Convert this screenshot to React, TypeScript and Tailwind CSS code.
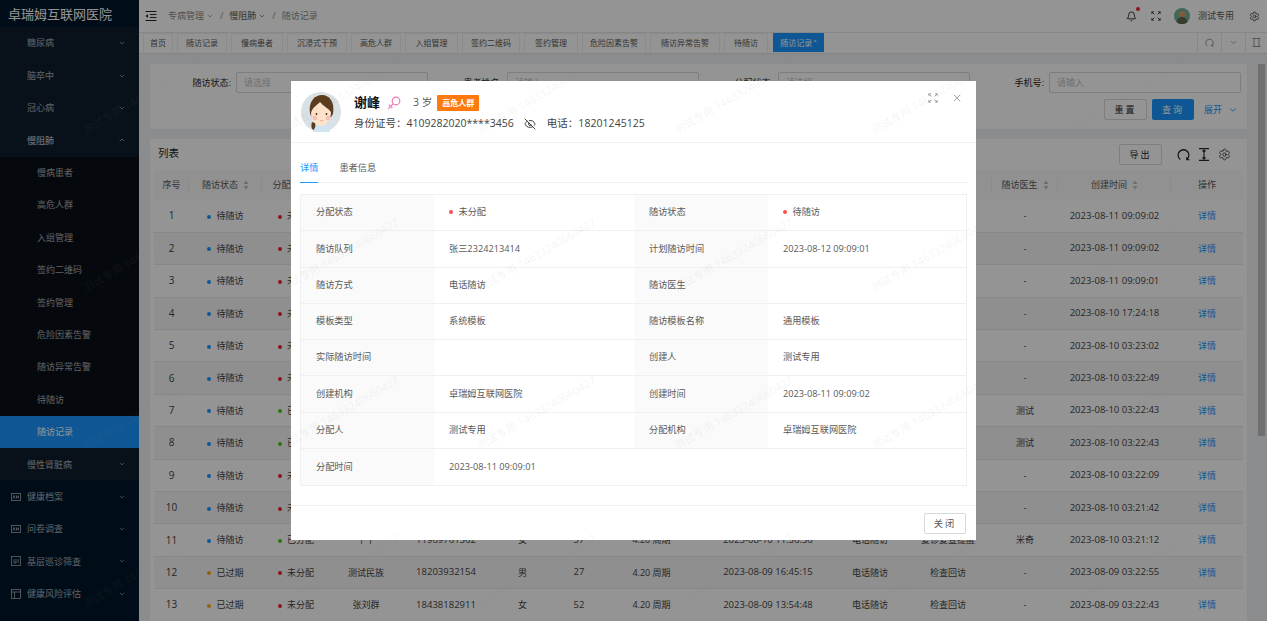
import React from 'react';
import { Bell, ChevronDown, ChevronUp, Settings, X, EyeOff } from 'lucide-react';

const menuTop = ['糖尿病', '脑卒中', '冠心病'];
const subMenu = ['慢病患者', '高危人群', '入组管理', '签约二维码', '签约管理', '危险因素告警', '随访异常告警', '待随访', '随访记录'];
const tabs = [
  { label: '首页', w: 'w-[30px]' },
  { label: '随访记录', w: 'w-[50px]' },
  { label: '慢病患者', w: 'w-[52px]' },
  { label: '沉浸式干预', w: 'w-[60px]' },
  { label: '高危人群', w: 'w-[50px]' },
  { label: '入组管理', w: 'w-[53px]' },
  { label: '签约二维码', w: 'w-[58px]' },
  { label: '签约管理', w: 'w-[54px]' },
  { label: '危险因素告警', w: 'w-[64px]' },
  { label: '随访异常告警', w: 'w-[70px]' },
  { label: '待随访', w: 'w-[44px]' },
];

interface Row {
  no: number;
  status: string;
  assign: string;
  name: string;
  phone: string;
  sex: string;
  age: string;
  period: string;
  plan: string;
  way: string;
  kind: string;
  doctor: string;
  created: string;
}

const row = (no: number, status: string, assign: string, name: string, phone: string, sex: string, age: string, plan: string, kind: string, doctor: string, created: string): Row => ({
  no, status, assign, name, phone, sex, age, period: '4.20 周期', plan, way: '电话随访', kind, doctor, created,
});

const rows: Row[] = [
  row(1, '待随访', '未分配', '谢峰', '18201245125', '女', '3', '2023-08-12 09:09:01', '通用模板', '-', '2023-08-11 09:09:02'),
  row(2, '待随访', '未分配', '谢峰', '18201245125', '女', '3', '2023-08-12 09:09:01', '通用模板', '-', '2023-08-11 09:09:02'),
  row(3, '待随访', '未分配', '谢峰', '18201245125', '女', '3', '2023-08-12 09:09:01', '通用模板', '-', '2023-08-11 09:09:01'),
  row(4, '待随访', '未分配', '张刘群', '18438182911', '女', '52', '2023-08-11 17:24:18', '检查回访', '-', '2023-08-10 17:24:18'),
  row(5, '待随访', '未分配', '测试民族', '18203932154', '男', '27', '2023-08-11 03:23:02', '检查回访', '-', '2023-08-10 03:23:02'),
  row(6, '待随访', '未分配', '测试民族', '18203932154', '男', '27', '2023-08-11 03:22:49', '检查回访', '-', '2023-08-10 03:22:49'),
  row(7, '待随访', '已分配', '测试民族', '18203932154', '男', '27', '2023-08-11 03:22:43', '检查回访', '测试', '2023-08-10 03:22:43'),
  row(8, '待随访', '已分配', '张刘群', '18438182911', '女', '52', '2023-08-11 03:22:43', '检查回访', '测试', '2023-08-10 03:22:43'),
  row(9, '待随访', '未分配', '张刘群', '18438182911', '女', '52', '2023-08-11 03:22:09', '检查回访', '-', '2023-08-10 03:22:09'),
  row(10, '待随访', '未分配', '张刘群', '18438182911', '女', '52', '2023-08-11 03:21:42', '检查回访', '-', '2023-08-10 03:21:42'),
  row(11, '待随访', '已分配', '丫丫', '11969761562', '女', '37', '2023-08-10 11:56:56', '复诊复查提醒', '米奇', '2023-08-10 03:21:12'),
  row(12, '已过期', '未分配', '测试民族', '18203932154', '男', '27', '2023-08-09 16:45:15', '检查回访', '-', '2023-08-09 03:22:55'),
  row(13, '已过期', '未分配', '张刘群', '18438182911', '女', '52', '2023-08-09 13:54:48', '检查回访', '-', '2023-08-09 03:22:43'),
];

const details: [string, React.ReactNode, string, React.ReactNode][] = [
  ['分配状态', <RedDot text="未分配" />, '随访状态', <RedDot text="待随访" />],
  ['随访队列', '张三2324213414', '计划随访时间', '2023-08-12 09:09:01'],
  ['随访方式', '电话随访', '随访医生', ''],
  ['模板类型', '系统模板', '随访模板名称', '通用模板'],
  ['实际随访时间', '', '创建人', '测试专用'],
  ['创建机构', '卓瑞姆互联网医院', '创建时间', '2023-08-11 09:09:02'],
  ['分配人', '测试专用', '分配机构', '卓瑞姆互联网医院'],
];

function RedDot({ text }: { text: string }) {
  return (
    <span className="flex items-center gap-[6px]">
      <span className="h-[3.5px] w-[3.5px] rounded-full bg-[#ff4d4f]" />
      {text}
    </span>
  );
}

function Dot({ color }: { color: string }) {
  return <span className={`mr-[5px] inline-block h-[4px] w-[4px] rounded-full align-middle ${color}`} />;
}

function SortIcon() {
  return (
    <svg width="6" height="10" viewBox="0 0 6 10" className="ml-[5px] shrink-0">
      <path d="M3 0.5 5.5 4H.5z" fill="#bfbfbf" />
      <path d="M3 9.5 5.5 6H.5z" fill="#bfbfbf" />
    </svg>
  );
}

function Expand({ className }: { className: string }) {
  return (
    <svg viewBox="0 0 12 12" fill="none" stroke="currentColor" strokeWidth="1" className={className}>
      <path d="M1 1l3 3M1 1v2.4M1 1h2.4M11 1 8 4M11 1v2.4M11 1H8.6M1 11l3-3M1 11V8.6M1 11h2.4M11 11 8 8M11 11V8.6M11 11H8.6" />
    </svg>
  );
}

function ReloadArc({ className }: { className: string }) {
  return (
    <svg viewBox="0 0 14 14" fill="none" stroke="currentColor" strokeWidth="1.4" className={className}>
      <path d="M3.6 12.4A5.8 5.8 0 1 1 10.4 12.4" />
      <path d="M10.6 9.8v2.8h2.6" />
    </svg>
  );
}

function FemaleIcon() {
  return (
    <svg width="14" height="14" viewBox="0 0 14 14" fill="none" stroke="#ef77b8" strokeWidth="1.2" className="ml-[7px] mr-[1px]">
      <circle cx="9" cy="5" r="3.8" />
      <path d="M6.300 7.700 1.200 12.800M1.800 8.600l3.600 3.600" />
    </svg>
  );
}

function MenuIcon({ kind }: { kind: number }) {
  if (kind === 2) {
    return (
      <svg width="10" height="10" viewBox="0 0 10 10" fill="none" stroke="currentColor" strokeWidth="0.8">
        <rect x="0.5" y="0.5" width="9" height="9" />
        <path d="M3 3v4h2M5 3v4M7.2 3v4" />
      </svg>
    );
  }
  if (kind === 3) {
    return (
      <svg width="10" height="10" viewBox="0 0 10 10" fill="none" stroke="currentColor" strokeWidth="0.8">
        <rect x="0.5" y="0.5" width="9" height="9" />
        <path d="M0.5 3h9M3.5 3v6.5" />
      </svg>
    );
  }
  return (
    <svg width="10" height="8" viewBox="0 0 10 8" fill="none" stroke="currentColor" strokeWidth="0.8">
      <rect x="0.5" y="0.5" width="9" height="7" />
      <path d="M2 5.5 3 2.5l1 3M5.5 5.5v-3M5.5 4h2M7.5 2.5v3" />
    </svg>
  );
}

function Avatar() {
  return (
    <svg width="40" height="40" viewBox="0 0 40 40" className="shrink-0">
      <circle cx="20" cy="20" r="20" fill="#d8e1e6" />
      <path d="M12 40c0-6 4-8 8-8s9 2 9 8z" fill="#cfe5f2" />
      <path d="M9 22C7 9 14 3 21 3s13 6 11 19l-2 3H11z" fill="#5b3c1c" />
      <path d="M10 21c1-5 6-8 9-11 3 4 8 6 11 10 0 8-5 14-10 14s-10-6-10-13z" fill="#fde3cb" />
      <circle cx="14" cy="26" r="2.4" fill="#f9c0b8" />
      <circle cx="27" cy="26" r="2.4" fill="#f9c0b8" />
      <circle cx="15.5" cy="22" r="0.9" fill="#3a2a1a" />
      <circle cx="25.5" cy="22" r="0.9" fill="#3a2a1a" />
      <path d="M18.500 28.500q2 1.500 4 0z" fill="#e8736a" />
      <path d="M11 30c-1 3-1 6 1 8 2-1 3-4 2-7z" fill="#5b3c1c" />
    </svg>
  );
}

function Watermark() {
  return (
    <div className="pointer-events-none absolute inset-0 overflow-hidden">
      <div className="absolute left-[44px] top-[18px] grid grid-cols-[repeat(6,197px)] auto-rows-[158px]">
        {Array.from({ length: 24 }).map((_, i) => (
          <div key={i} className="flex items-center justify-center">
            <span className="-rotate-[30deg] whitespace-nowrap text-[11px] text-[#808080]/10">测试专用 14633240660427</span>
          </div>
        ))}
      </div>
    </div>
  );
}

function Field({ label, placeholder }: { label: string; placeholder: string }) {
  return (
    <div className="flex items-center justify-end gap-[5px]">
      <span className="text-[#262626]">{label}:</span>
      <div className="flex h-[21px] w-[192px] items-center rounded-[2px] border border-[#d9d9d9] bg-white px-[7px] text-[#bfbfbf]">
        {placeholder}
      </div>
    </div>
  );
}

function Sidebar() {
  return (
    <aside className="flex h-full w-[139px] shrink-0 flex-col bg-[#001529] text-[9px] text-[#ffffffa6]">
      <div className="flex h-[27px] items-start bg-[#001529] pl-[8px] text-[13px] leading-[28px] text-white">卓瑞姆互联网医院</div>
      <div className="bg-[#0f1d2d]">
        {menuTop.map((m) => (
          <div key={m} className="flex h-[32.4px] items-center justify-between pl-[27px] pr-[13px]">
            {m}
            <ChevronDown size={8} />
          </div>
        ))}
        <div className="flex h-[32.4px] items-center justify-between pl-[27px] pr-[13px] text-white/80">
          慢阻肺
          <ChevronUp size={8} />
        </div>
        <div className="bg-[#0a1019]">
          {subMenu.map((m) => (
            <div key={m} className={`flex h-[32.4px] items-center pl-[37px] ${m === '随访记录' ? 'bg-[#1a96ff] text-white' : ''}`}>
              {m}
            </div>
          ))}
        </div>
        <div className="flex h-[32.4px] items-center justify-between pl-[27px] pr-[13px]">
          慢性肾脏病
          <ChevronDown size={8} />
        </div>
      </div>
      {['健康档案', '问卷调查', '基层巡诊筛查', '健康风险评估'].map((m, i) => (
        <div key={m} className="flex h-[32.4px] shrink-0 items-center pl-[11px] pr-[13px]">
          <span className="flex w-[16px] justify-start">
            <MenuIcon kind={i} />
          </span>
          <span className="flex-1">{m}</span>
          <ChevronDown size={8} />
        </div>
      ))}
    </aside>
  );
}

function TopBar() {
  return (
    <>
      <header className="flex h-[33px] shrink-0 items-center border-b border-[#e8e8e8] bg-white text-[9px] text-[#8c8c8c]">
        <svg width="12" height="10" viewBox="0 0 12 10" className="ml-[6px] mr-[11px] text-[#262626]" fill="none" stroke="currentColor" strokeWidth="1">
          <path d="M0.500 0.500h11M5 3.500h6.500M5 6.500h6.500M0.500 9.500h11" />
          <path d="M3 3v4L.5 5z" fill="currentColor" stroke="none" />
        </svg>
        <span className="flex items-center gap-[2px]">专病管理<ChevronDown size={8} /></span>
        <span className="mx-[6px]">/</span>
        <span className="flex items-center gap-[2px] text-[#595959]">慢阻肺<ChevronDown size={8} /></span>
        <span className="mx-[6px]">/</span>
        <span>随访记录</span>
        <div className="ml-auto flex items-center text-[#262626]">
          <span className="relative">
            <Bell size={11} />
            <span className="absolute right-[-3px] top-[-4px] h-[4px] w-[4px] rounded-full bg-[#f5222d]" />
          </span>
          <Expand className="ml-[14px] h-[10px] w-[10px]" />
          <svg width="16" height="16" viewBox="0 0 16 16" className="ml-[13px]">
            <circle cx="8" cy="8" r="8" fill="#6fb39a" />
            <circle cx="8" cy="6.500" r="3.500" fill="#d4a069" />
            <path d="M2.500 14c1-4 3-5 5.500-5s4.500 1 5.500 5a8 8 0 0 1-11 0z" fill="#5d6a4f" />
          </svg>
          <span className="ml-[8px] text-[#595959]">测试专用</span>
          <Settings size={11} className="ml-[15px] mr-[7px]" strokeWidth={1.5} />
        </div>
      </header>
      <div className="flex h-[20px] shrink-0 items-start bg-white pl-[4px] text-[8px] text-[#595959] shadow-[0_1px_0_#e4e4e4]">
        <div className="flex flex-1 gap-[4px]">
          {tabs.map((t) => (
            <div key={t.label} className={`flex h-[19px] items-center justify-center border border-b-0 border-[#f0f0f0] ${t.w}`}>
              {t.label}
            </div>
          ))}
          <div className="ml-[1px] flex h-[19px] w-[51px] items-center justify-center bg-[#1a96ff] text-white">
            随访记录<span className="relative top-[-1px] ml-[1px] text-[6px]">×</span>
          </div>
        </div>
        <div className="flex h-[19px] text-[#8c8c8c]">
          <div className="flex w-[24px] items-center justify-center border-l border-[#e8e8e8]"><ReloadArc className="h-[9px] w-[9px]" /></div>
          <div className="flex w-[24px] items-center justify-center border-l border-[#e8e8e8]"><ChevronDown size={9} /></div>
          <div className="flex w-[22px] items-center justify-center border-l border-[#e8e8e8]">
            <svg width="9" height="9" viewBox="0 0 9 9" fill="none" stroke="currentColor" strokeWidth="0.9">
              <path d="M.5.500h8M.5 8.500h8M2 .5v8M7 .5v8" />
            </svg>
          </div>
        </div>
      </div>
    </>
  );
}

function ListTable() {
  const heads: [string, boolean][] = [
    ['序号', false], ['随访状态', true], ['分配状态', true], ['患者姓名', false], ['手机号', false], ['性别', false], ['年龄', false],
    ['随访周期', false], ['计划随访时间', true], ['随访方式', false], ['随访模板', false], ['随访医生', true], ['创建时间', true], ['操作', false],
  ];
  const widths = ['w-[35px]', 'w-[73px]', 'w-[68px]', 'w-[72px]', 'w-[88px]', 'w-[65px]', 'w-[48px]', 'w-[97px]', 'w-[136px]', 'w-[68px]', 'w-[88px]', 'w-[66px]', 'w-[113px]', 'w-[72px]'];
  return (
    <table className="w-[1089px] table-fixed border-collapse text-center text-[9px] text-[#434343]">
      <colgroup>
        {widths.map((w, i) => <col key={i} className={w} />)}
      </colgroup>
      <thead>
        <tr className="h-[30px] bg-[#fafafa] text-[#595959]">
          {heads.map(([h, sort], i) => (
            <th key={h} className="relative font-normal">
              <span className="flex items-center justify-center">{h}{sort && <SortIcon />}</span>
              {i < heads.length - 1 && <span className="absolute right-0 top-[8px] h-[14px] w-px bg-[#eeeeee]" />}
            </th>
          ))}
        </tr>
      </thead>
      <tbody>
        {rows.map((r) => (
          <tr key={r.no} className={`h-[32.4px] border-b border-[#e8e8e8] ${r.no % 2 === 0 ? 'bg-[#f7f7f7]' : 'bg-white'}`}>
            <td className="text-[10px]">{r.no}</td>
            <td><Dot color={r.status === '已过期' ? 'bg-[#faad14]' : 'bg-[#1a96ff]'} />{r.status}</td>
            <td><Dot color={r.assign === '已分配' ? 'bg-[#52c41a]' : 'bg-[#f5222d]'} />{r.assign}</td>
            <td>{r.name}</td>
            <td className="text-[9.500px]">{r.phone}</td>
            <td>{r.sex}</td>
            <td className="text-[9.500px]">{r.age}</td>
            <td>{r.period}</td>
            <td className="text-[9.500px]">{r.plan}</td>
            <td>{r.way}</td>
            <td>{r.kind}</td>
            <td>{r.doctor}</td>
            <td className="text-[9.500px]">{r.created}</td>
            <td className="text-[#1a96ff]">详情</td>
          </tr>
        ))}
      </tbody>
    </table>
  );
}

function DetailModal() {
  return (
    <div className="absolute left-[291px] top-[81px] flex h-[459px] w-[685px] flex-col bg-white text-[9.200px] text-[#595959]">
      <div className="relative flex h-[62px] shrink-0 items-center gap-[13px] border-b border-[#f2f2f2] pl-[10px]">
        <Avatar />
        <div className="flex flex-col gap-[5px] pt-[4px]">
          <div className="flex h-[16px] items-center">
            <span className="text-[13px] font-bold text-[#111111]">谢峰</span>
            <FemaleIcon />
            <span className="ml-[11px] text-[10.500px]">3 岁</span>
            <span className="ml-[5px] flex h-[16px] w-[42px] items-center justify-center rounded-[1px] bg-[#ff7a0c] text-[8px] font-bold text-white">高危人群</span>
          </div>
          <div className="flex items-center text-[10.500px] text-[#434343]">
            身份证号：4109282020****3456
            <EyeOff size={12} className="ml-[10px]" />
            <span className="ml-[11px] tracking-[0.05px]">电话：18201245125</span>
          </div>
        </div>
        <Expand className="absolute right-[38px] top-[12px] h-[10px] w-[10px] text-[#8c8c8c]" />
        <X size={12} strokeWidth={1.3} className="absolute right-[13px] top-[11px] text-[#737373]" />
      </div>
      <div className="mx-[9px] mt-[13px] flex h-[27px] shrink-0 items-start gap-[21px] border-b border-[#f0f0f0] pt-[5px]">
        <span className="relative h-[22px] text-[#1a96ff]">
          详情
          <span className="absolute bottom-0 left-0 right-0 h-[1px] bg-[#1a96ff]" />
        </span>
        <span>患者信息</span>
      </div>
      <div className="mx-[9px] mt-[11px] border border-[#f0f0f0]">
        {details.map(([a, b, c, d]) => (
          <div key={a} className="grid h-[36.300px] grid-cols-[133px_200px_134px_1fr] items-stretch border-b border-[#f0f0f0]">
            <div className="flex items-center bg-[#fafafa] pb-[1px] pl-[15px]">{a}</div>
            <div className="flex items-center pb-[1px] pl-[15px]">{b}</div>
            <div className="flex items-center bg-[#fafafa] pb-[1px] pl-[15px]">{c}</div>
            <div className="flex items-center pb-[1px] pl-[15px]">{d}</div>
          </div>
        ))}
        <div className="grid h-[35.700px] grid-cols-[133px_1fr] items-stretch">
          <div className="flex items-center bg-[#fafafa] pl-[15px]">分配时间</div>
          <div className="flex items-center pl-[15px]">2023-08-11 09:09:01</div>
        </div>
      </div>
      <div className="mt-auto flex h-[35px] shrink-0 items-start justify-end border-t border-[#f0f0f0] pr-[10px] pt-[7px]">
        <div className="flex h-[21px] w-[42px] items-center justify-center rounded-[2px] border border-[#d9d9d9] tracking-[2px]">关闭</div>
      </div>
    </div>
  );
}

export default function App() {
  return (
    <div className="relative flex h-[621px] w-[1267px] overflow-hidden bg-[#f0f2f5] font-['Open_Sans','Noto_Sans_CJK_SC',sans-serif] text-[9px]">
      <Sidebar />
      <main className="flex min-w-0 flex-1 flex-col">
        <TopBar />
        <div className="flex min-h-0 flex-1">
          <div className="min-w-0 flex-1 pl-[11px] pt-[11px]">
            <section className="h-[65px] w-[1097px] bg-white pr-[6px] pt-[8px]">
              <div className="grid grid-cols-[repeat(4,271px)] justify-end">
                <Field label="随访状态" placeholder="请选择" />
                <Field label="患者姓名" placeholder="请输入" />
                <Field label="分配状态" placeholder="请选择" />
                <Field label="手机号" placeholder="请输入" />
              </div>
              <div className="mt-[6px] flex items-center justify-end gap-[5px]">
                <div className="flex h-[21px] w-[43px] items-center justify-center rounded-[2px] border border-[#d9d9d9] tracking-[2px] text-[#262626]">重置</div>
                <div className="flex h-[21px] w-[42px] items-center justify-center rounded-[2px] bg-[#1a96ff] tracking-[2px] text-white">查询</div>
                <div className="ml-[5px] mr-[3px] flex items-center gap-[6px] text-[#1a96ff]">展开<ChevronDown size={10} /></div>
              </div>
            </section>
            <section className="mt-[10px] w-[1097px] bg-white px-[4px]">
              <div className="flex h-[31px] items-center">
                <span className="pb-[2px] pl-[4px] text-[10.500px] text-[#262626]">列表</span>
                <div className="ml-auto flex items-center text-[#262626]">
                  <div className="flex h-[21px] w-[43px] items-center justify-center rounded-[2px] border border-[#d9d9d9] tracking-[2px]">导出</div>
                  <ReloadArc className="ml-[15px] h-[13px] w-[13px]" />
                  <svg width="12" height="13" viewBox="0 0 12 13" className="ml-[8px]" fill="none" stroke="currentColor" strokeWidth="1.100">
                    <path d="M1 .6h10M1 12.400h10M6 2v9M4.500 3.500 6 2l1.500 1.500M4.500 9.500 6 11l1.500-1.500" />
                  </svg>
                  <Settings size={13} strokeWidth={1.4} className="ml-[8px] mr-[12px]" />
                </div>
              </div>
              <ListTable />
            </section>
          </div>
          <div className="mr-[2px] mt-[11px] h-[372px] w-[7px] shrink-0 bg-[#c1c1c1]" />
        </div>
      </main>
      <div className="absolute inset-0 bg-black/42" />
      <DetailModal />
      <Watermark />
    </div>
  );
}
